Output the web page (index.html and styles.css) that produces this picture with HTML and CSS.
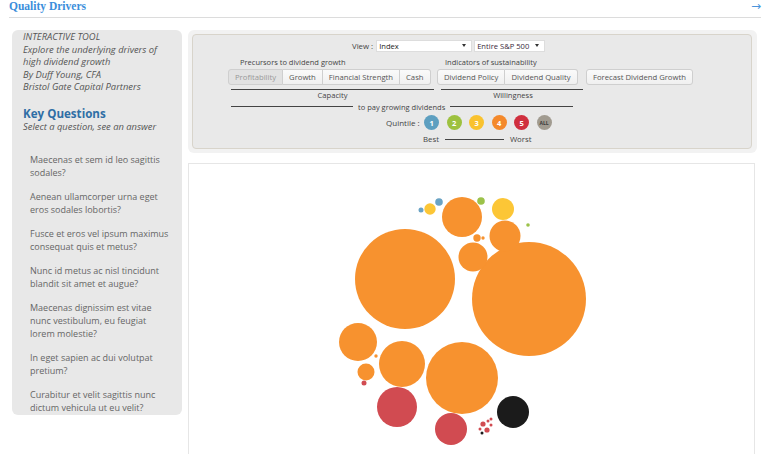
FILE: index.html
```html
<!DOCTYPE html>
<html>
<head>
<meta charset="utf-8">
<link rel="stylesheet" href="styles.css">
</head>
<body>
<header class="top">
  <h1 class="title">Quality Drivers</h1>
  <span class="arrow">&#8594;</span>
</header>
<main class="main">
  <aside class="sidebar">
    <p class="intro">INTERACTIVE TOOL<br>Explore the underlying drivers of high dividend growth<br>By Duff Young, CFA<br>Bristol Gate Capital Partners</p>
    <h2 class="kq">Key Questions</h2>
    <p class="kq-sub">Select a question, see an answer</p>
    <ul class="questions">
      <li>Maecenas et sem id leo sagittis sodales?</li>
      <li>Aenean ullamcorper urna eget eros sodales lobortis?</li>
      <li>Fusce et eros vel ipsum maximus consequat quis et metus?</li>
      <li>Nunc id metus ac nisl tincidunt blandit sit amet et augue?</li>
      <li>Maecenas dignissim est vitae nunc vestibulum, eu feugiat lorem molestie?</li>
      <li>In eget sapien ac dui volutpat pretium?</li>
      <li>Curabitur et velit sagittis nunc dictum vehicula ut eu velit?</li>
    </ul>
  </aside>
  <section class="content">
    <div class="ctrl-outer">
      <div class="ctrl">
        <div class="view-row">
          <span class="view-label">View :</span>
          <div class="sel sel-index"><span>Index</span><span class="caret"></span></div>
          <div class="sel sel-uni"><span>Entire S&amp;P 500</span><span class="caret"></span></div>
        </div>
        <div class="groups">
          <div class="glabel glabel-cap">Precursors to dividend growth</div>
          <div class="glabel glabel-will">Indicators of sustainability</div>
          <div></div>
          <div class="btns">
            <button class="btn active">Profitability</button><button class="btn">Growth</button><button class="btn">Financial Strength</button><button class="btn">Cash</button>
          </div>
          <div class="btns btns-will">
            <button class="btn">Dividend Policy</button><button class="btn">Dividend Quality</button>
          </div>
          <div class="btns btns-fc">
            <button class="btn single">Forecast Dividend Growth</button>
          </div>
          <div class="under under-cap">Capacity</div>
          <div class="under under-will">Willingness</div>
          <div></div>
        </div>
        <div class="pay-row"><span class="rule r1"></span><span class="pay-text">to pay growing dividends</span><span class="rule r2"></span></div>
        <div class="quint-row">
          <span class="quint-label">Quintile :</span>
          <span class="q q1">1</span><span class="q q2">2</span><span class="q q3">3</span><span class="q q4">4</span><span class="q q5">5</span><span class="q qall">ALL</span>
        </div>
        <div class="best-row"><span>Best</span><span class="rule r3"></span><span>Worst</span></div>
      </div>
    </div>
    <div class="chart">
      <svg class="bubbles" width="566" height="300" viewBox="189 164 566 300">
        <g fill="#f7922f">
          <circle cx="405" cy="279" r="50"/>
          <circle cx="529" cy="299" r="57"/>
          <circle cx="462" cy="217" r="20"/>
          <circle cx="505" cy="236" r="15.5"/>
          <circle cx="473" cy="257" r="14.5"/>
          <circle cx="477" cy="238" r="3.7"/>
          <circle cx="483" cy="238" r="1.7"/>
          <circle cx="358" cy="342" r="19"/>
          <circle cx="402" cy="364" r="23"/>
          <circle cx="462" cy="378" r="36"/>
          <circle cx="366" cy="372" r="8.5"/>
          <circle cx="376" cy="356" r="1.7"/>
        </g>
        <circle cx="503" cy="209" r="11" fill="#fcc636"/>
        <circle cx="430" cy="209" r="5.7" fill="#fcc636"/>
        <circle cx="481" cy="201" r="3.8" fill="#9cc24a"/>
        <circle cx="528" cy="225" r="1.8" fill="#9cc24a"/>
        <circle cx="439" cy="202" r="3.8" fill="#6aa3c4"/>
        <circle cx="421" cy="210" r="2.5" fill="#6aa3c4"/>
        <g fill="#d14b51">
          <circle cx="397" cy="407" r="20"/>
          <circle cx="451" cy="429" r="16"/>
          <circle cx="364" cy="383" r="2.5"/>
          <circle cx="483" cy="424" r="2.6"/>
          <circle cx="487" cy="430" r="2.6"/>
          <circle cx="488" cy="421" r="1.5"/>
          <circle cx="491" cy="419" r="1.5"/>
          <circle cx="491" cy="425" r="1.5"/>
          <circle cx="480" cy="429" r="1.5"/>
        </g>
        <circle cx="513" cy="412" r="16" fill="#1b1b1b"/>
        <circle cx="482" cy="433" r="1.5" fill="#1b1b1b"/>
      </svg>
    </div>
  </section>
</main>
</body>
</html>
```
FILE: styles.css
```css
* { box-sizing: border-box; }
body {
  margin: 0;
  font-family: "Open Sans", "DejaVu Sans", sans-serif;
  background: #fff;
  color: #444;
}
.top {
  display: flex;
  justify-content: space-between;
  align-items: center;
  margin: 0 7px 0 9px;
  height: 18px;
  border-bottom: 1px solid #dcdcdc;
}
.title {
  margin: 0;
  font-family: "Liberation Serif", serif;
  font-weight: bold;
  font-size: 11.5px;
  color: #3b8edb;
  line-height: 12px;
  margin-top: -6px;
}
.arrow {
  color: #4a95dc;
  font-size: 12px;
  line-height: 12px;
  margin-top: -6px;
  font-family: "DejaVu Sans", sans-serif;
}
.main {
  display: flex;
  gap: 6px;
  padding-left: 12px;
  margin-top: 12px;
  align-items: flex-start;
}
.sidebar {
  width: 170px;
  height: 385px;
  background: #e8e8e8;
  border-radius: 6px;
  padding: 1px 0 0 11px;
  flex: none;
}
.intro {
  margin: 0;
  font-style: italic;
  font-size: 9.4px;
  line-height: 12.5px;
  color: #555;
  padding-right: 6px;
}
.kq {
  margin: 13px 0 0 0;
  font-size: 11.6px;
  font-weight: bold;
  color: #2f6ea5;
  line-height: 14px;
}
.kq-sub {
  margin: 0;
  font-style: italic;
  font-size: 9.4px;
  line-height: 12px;
  color: #555;
}
.questions {
  list-style: none;
  margin: 20px 0 0 0;
  padding: 0 13px 0 7px;
}
.questions li {
  font-size: 9px;
  line-height: 13px;
  color: #666;
  margin-bottom: 11px;
}
.content {
  width: 569px;
  flex: none;
}
.ctrl-outer {
  background: #f2f2f2;
  border-radius: 6px;
  padding: 4px 5px 4px 4px;
}
.ctrl {
  background: #e9e9e9;
  border: 1px solid #d8d4cb;
  border-radius: 4px;
  height: 115px;
  padding: 4px 0 0 35px;
  font-size: 7.6px;
  color: #444;
}
.view-row {
  display: flex;
  align-items: center;
  margin-left: 124px;
  height: 13px;
  gap: 2px;
}
.view-label { margin-right: 1px; font-size: 7.8px; }
.sel {
  display: flex;
  justify-content: space-between;
  align-items: center;
  height: 12px;
  background: #fff;
  border: 1px solid #ddd;
  padding: 0 5px 0 2px;
  font-size: 7.6px;
  color: #222;
}
.sel-index { width: 96px; }
.sel-uni { width: 71px; color: #3a2a3a; }
.caret {
  width: 0; height: 0;
  border-left: 2.5px solid transparent;
  border-right: 2.5px solid transparent;
  border-top: 3px solid #333;
}
.groups {
  display: grid;
  grid-template-columns: 209px 149px auto;
  margin-top: 4px;
}
.glabel { height: 13px; line-height: 13px; font-size: 7.5px; }
.glabel-cap { padding-left: 12px; }
.glabel-will { padding-left: 8px; }
.btns { display: flex; height: 16px; }
.btn {
  font-family: "Open Sans", sans-serif;
  font-size: 7.7px;
  color: #555;
  height: 16px;
  padding: 0 6px;
  background: linear-gradient(#fafafa, #f0f0f0);
  border: 1px solid #cfcfcf;
  border-left-width: 0;
  margin: 0;
  line-height: 13px;
}
.btn:first-child { border-left-width: 1px; border-radius: 3px 0 0 3px; }
.btn:last-child { border-radius: 0 3px 3px 0; }
.btn.single { border-radius: 3px; }
.btn.active { background: #e2e2e2; color: #999; }
.under {
  margin-top: 4px;
  border-top: 1px solid #444;
  text-align: center;
  line-height: 11px;
  height: 13px;
  font-size: 7.6px;
}
.under-cap { margin-left: 3px; margin-right: 3px; }
.under-will { margin-left: 4px; margin-right: 3px; padding-left: 2px; }
.pay-row {
  display: flex;
  align-items: center;
  height: 9px;
  margin-left: 3px;
}
.rule { display: block; height: 1px; background: #444; }
.r1 { width: 122px; }
.r2 { width: 123px; }
.pay-text { padding: 0 5px; font-size: 7.5px; }
.quint-row {
  display: flex;
  align-items: center;
  margin-left: 158px;
  margin-top: 3px;
  height: 17px;
  gap: 7.5px;
}
.quint-label { font-size: 8px; margin-right: -3px; }
.q {
  width: 15px; height: 15px;
  border-radius: 50%;
  color: #fff;
  font-weight: bold;
  font-size: 7.5px;
  display: flex; align-items: center; justify-content: center;
  flex: none;
}
.q1 { background: #5d9fc0; }
.q2 { background: #9dc13f; }
.q3 { background: #f9c22e; }
.q4 { background: #f4892b; }
.q5 { background: #d02f3e; }
.qall { background: #a19b90; color: #3a3a3a; font-size: 5px; }
.best-row {
  display: flex;
  align-items: center;
  gap: 6px;
  margin-left: 195px;
  height: 12px;
  margin-top: 2px;
  font-size: 7.8px;
}
.r3 { width: 59px; }
.chart {
  margin-top: 10px;
  width: 567px;
  height: 300px;
  border: 1px solid #e6e6e6;
  border-bottom: none;
  background: #fff;
  overflow: hidden;
}
.bubbles { display: block; }
```
